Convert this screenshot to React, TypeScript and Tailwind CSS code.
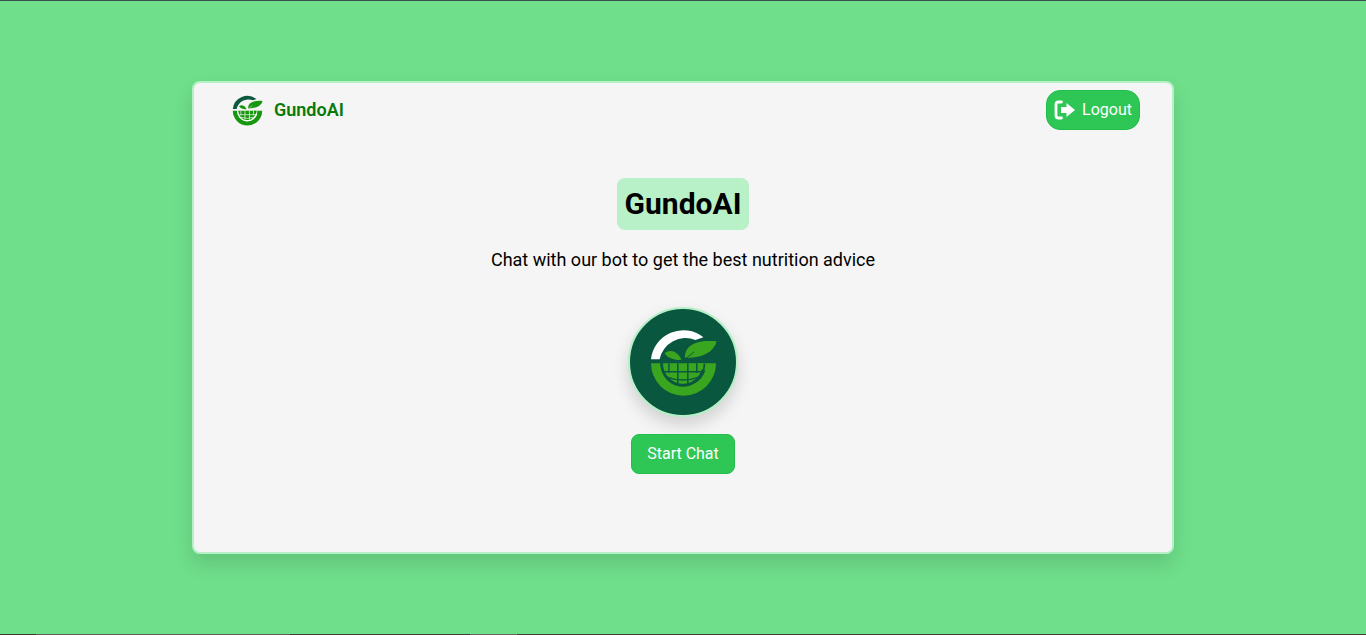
import React from "react";

function Logo({ arc, green, line, className }: { arc: string; green: string; line: string; className: string }) {
  return (
    <svg viewBox="100 88 220 220" className={className}>
      <path d="M112 188 A98 98 0 0 1 270 122 L246 130 A80 80 0 0 0 138 188 Z" fill={arc} />
      <path d="M112 200 H140 A70 72 0 0 0 276 222 L252 214 V200 H308 A98 98 0 0 1 112 200 Z" fill={green} />
      <path d="M148 200 H268 A60 62 0 0 1 148 200 Z" fill={green} />
      <g fill="none" stroke={line} strokeWidth="4.5">
        <path d="M166 200 V230 M193 200 V264 M223 200 V264 M250 200 V230" />
        <path d="M150 226 H266" />
        <path d="M160 242 Q208 260 256 242" />
        <path d="M143 202 A65 66 0 0 0 273 202" strokeWidth="5" />
      </g>
      <path d="M214 184 C214 150 240 128 310 134 C302 168 262 186 214 184 Z" fill={green} />
      <path d="M204 190 C192 166 172 156 153 170 C163 185 184 192 204 190 Z" fill={green} />
      <path d="M208 192 C208 178 205 172 198 166 M212 190 L242 166" fill="none" stroke={line} strokeWidth="3" />
    </svg>
  );
}

function LogoutIcon() {
  return (
    <svg viewBox="0 0 22 20" className="w-[22px] h-[20px]" fill="white">
      <path d="M7.5 2 H4.5 A2.5 2.5 0 0 0 2 4.5 V15.5 A2.5 2.5 0 0 0 4.5 18 H7.5" fill="none" stroke="white" strokeWidth="2.8" strokeLinecap="round" />
      <path d="M7 7 H12.5 V3 L21 10 L12.5 17 V13 H7 Z" />
    </svg>
  );
}

export default function App() {
  return (
    <div className="h-screen flex flex-col bg-[#6fdf8b] font-['Roboto',sans-serif] text-black">
      <div className="h-px bg-[#3f4f50]" />
      <main className="flex-1 flex items-center justify-center">
        <div className="w-[982px] h-[473px] flex flex-col items-center rounded-lg border-2 border-[#b5f0c6] bg-[#f5f5f5] shadow-[0_10px_20px_rgba(0,0,0,0.12)]">
          <header className="w-full flex items-center justify-between pt-[7px] pl-[37px] pr-[32px]">
            <div className="flex items-center gap-[10px]">
              <Logo arc="#0b5a40" green="#17960f" line="#ffffff" className="w-[33px] h-[33px]" />
              <span className="mb-[2px] text-[18px] font-semibold text-[#077a07]">GundoAI</span>
            </div>
            <button className="h-10 w-[94px] flex items-center justify-center gap-[6px] rounded-[14px] border border-[#1fbf4a] bg-[#2ec654] text-white text-base">
              <LogoutIcon />
              Logout
            </button>
          </header>
          <h1 className="mt-[48px] h-[52px] w-[132px] flex items-center justify-center pb-[2px] rounded-lg bg-[#b8f0c8] text-[30px] font-bold">GundoAI</h1>
          <p className="mt-[16px] text-[18px] leading-[28px]">Chat with our bot to get the best nutrition advice</p>
          <div className="mt-[33px] w-[110px] h-[110px] rounded-full border-2 border-[#b5f0c6] bg-[#0a5740] shadow-[0_8px_16px_rgba(0,0,0,0.15)] flex items-center justify-center">
            <Logo arc="#ffffff" green="#3aa61f" line="#0a5740" className="w-[73px] h-[73px]" />
          </div>
          <button className="mt-[17px] h-10 w-[104px] rounded-lg border border-[#1fbf4a] bg-[#2ec654] text-white text-base">Start Chat</button>
        </div>
      </main>
      <div className="h-px flex bg-[#3f3f30]">
        <div className="w-[36px] bg-[#3a3a2a]" />
        <div className="w-[254px] bg-[#5f5f55]" />
        <div className="w-[180px] bg-[#3f3f30]" />
        <div className="w-[47px] bg-[#666660]" />
      </div>
    </div>
  );
}
